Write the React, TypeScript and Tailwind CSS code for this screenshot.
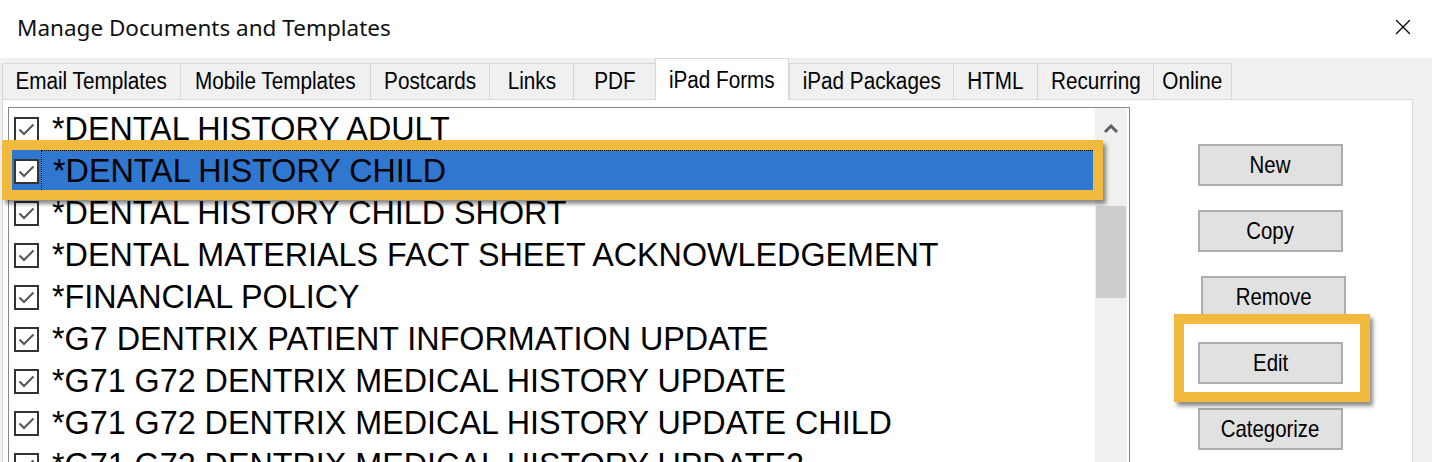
import { X } from "lucide-react";

const tabs = [
  { label: "Email Templates", w: 178 },
  { label: "Mobile Templates", w: 190 },
  { label: "Postcards", w: 119 },
  { label: "Links", w: 84 },
  { label: "PDF", w: 82 },
  { label: "iPad Forms", w: 134, active: true },
  { label: "iPad Packages", w: 164 },
  { label: "HTML", w: 84 },
  { label: "Recurring", w: 116 },
  { label: "Online", w: 79 },
];

const forms = [
  "*DENTAL HISTORY ADULT",
  "*DENTAL HISTORY CHILD",
  "*DENTAL HISTORY CHILD SHORT",
  "*DENTAL MATERIALS FACT SHEET ACKNOWLEDGEMENT",
  "*FINANCIAL POLICY",
  "*G7 DENTRIX PATIENT INFORMATION UPDATE",
  "*G71 G72 DENTRIX MEDICAL HISTORY UPDATE",
  "*G71 G72 DENTRIX MEDICAL HISTORY UPDATE CHILD",
  "*G71 G72 DENTRIX MEDICAL HISTORY UPDATE2",
];

function CheckBox() {
  return (
    <span className="w-[25px] h-[25px] shrink-0 border-2 border-[#333333] bg-white flex items-center justify-center">
      <svg width="17" height="13" viewBox="0 0 17 13" fill="none">
        <path d="M1.5 6.5 L6 11 L15.5 1.5" stroke="#555555" strokeWidth="2" />
      </svg>
    </span>
  );
}

function Button({ label, shift }: { label: string; shift?: boolean }) {
  return (
    <button
      className={`w-[145px] h-[42px] bg-[#e1e1e1] border-2 border-[#adadad] text-black leading-none flex items-center justify-center ${
        shift ? "ml-[3px]" : ""
      }`}
    >
      <span className="inline-block text-[24px] scale-x-[0.85]">{label}</span>
    </button>
  );
}

export default function App() {
  return (
    <div
      className="w-[1432px] h-[462px] relative overflow-hidden bg-white flex flex-col"
      style={{ fontFamily: '"Liberation Sans", Arial, sans-serif' }}
    >
      {/* ── Title bar ── */}
      <div className="h-[58px] shrink-0 flex items-center justify-between pl-[17px] pr-[16px]">
        <span
          className="text-[22.5px] text-[#111] pb-[2px]"
          style={{ fontFamily: '"Noto Sans", sans-serif' }}
        >
          Manage Documents and Templates
        </span>
        <X size={26} strokeWidth={1.2} className="text-black mb-[4px]" />
      </div>

      {/* ── Tab control ── */}
      <div className="flex-1 bg-[#f0f0f0] flex flex-col">
        <div className="h-[41px] shrink-0 flex items-end pl-[2px]">
          {tabs.map((t) =>
            t.active ? (
              <div
                key={t.label}
                style={{ width: t.w }}
                className="h-[42px] -mb-[1px] relative z-10 bg-white border border-b-0 border-[#d9d9d9] flex items-start justify-center pt-[4px] text-black whitespace-nowrap"
              >
                <span className="inline-block text-[23px] scale-x-[0.9]">{t.label}</span>
              </div>
            ) : (
              <div
                key={t.label}
                style={{ width: t.w }}
                className="h-[36px] bg-[#f0f0f0] border border-b-0 border-r-0 last:border-r border-[#d9d9d9] flex items-center justify-center text-black whitespace-nowrap"
              >
                <span className="inline-block text-[23px] scale-x-[0.9]">{t.label}</span>
              </div>
            )
          )}
        </div>

        <div className="flex-1 ml-[2px] w-[1411px] bg-white border border-[#d9d9d9] flex pt-[7px] pl-[5px]">
          {/* List */}
          <div className="w-[1122px] self-stretch border border-b-0 border-[#828790] flex">
            <div className="flex-1 flex flex-col">
              {forms.map((f, i) => (
                <div
                  key={f}
                  className={`h-[42px] shrink-0 flex items-center pl-[5px] ${
                    i === 1 ? "bg-[#3077cf]" : ""
                  }`}
                >
                  <CheckBox />
                  <span
                    className={`ml-[2px] pl-[11px] h-full flex items-center text-[32.3px] text-black whitespace-nowrap ${
                      i === 1 ? "flex-1 border border-dotted border-black" : ""
                    }`}
                  >
                    {f}
                  </span>
                </div>
              ))}
            </div>
            <div className="w-[32px] shrink-0 mr-[2px] bg-[#f0f0f0] flex flex-col items-center">
              <svg width="16" height="10" viewBox="0 0 16 10" className="mt-[16px]">
                <path d="M2 8 L8 2 L14 8" stroke="#606060" strokeWidth="3" fill="none" />
              </svg>
              <div className="w-[30px] h-[92px] bg-[#cdcdcd] mt-[72px]" />
            </div>
          </div>

          {/* Buttons */}
          <div className="ml-[68px] pt-[37px] flex flex-col gap-[24px]">
            <Button label="New" />
            <Button label="Copy" />
            <Button label="Remove" shift />
            <Button label="Edit" />
            <Button label="Categorize" />
          </div>
        </div>
      </div>

      {/* ── Highlight annotations ── */}
      <div className="absolute left-[2px] top-[140px] w-[1101px] h-[60px] border-[10px] border-[#f1ba3f] shadow-[3px_4px_4px_rgba(0,0,0,0.45)] pointer-events-none" />
      <div className="absolute left-[1174px] top-[314px] w-[196px] h-[88px] border-[10px] border-[#f1ba3f] shadow-[3px_4px_4px_rgba(0,0,0,0.45)] pointer-events-none" />
    </div>
  );
}
